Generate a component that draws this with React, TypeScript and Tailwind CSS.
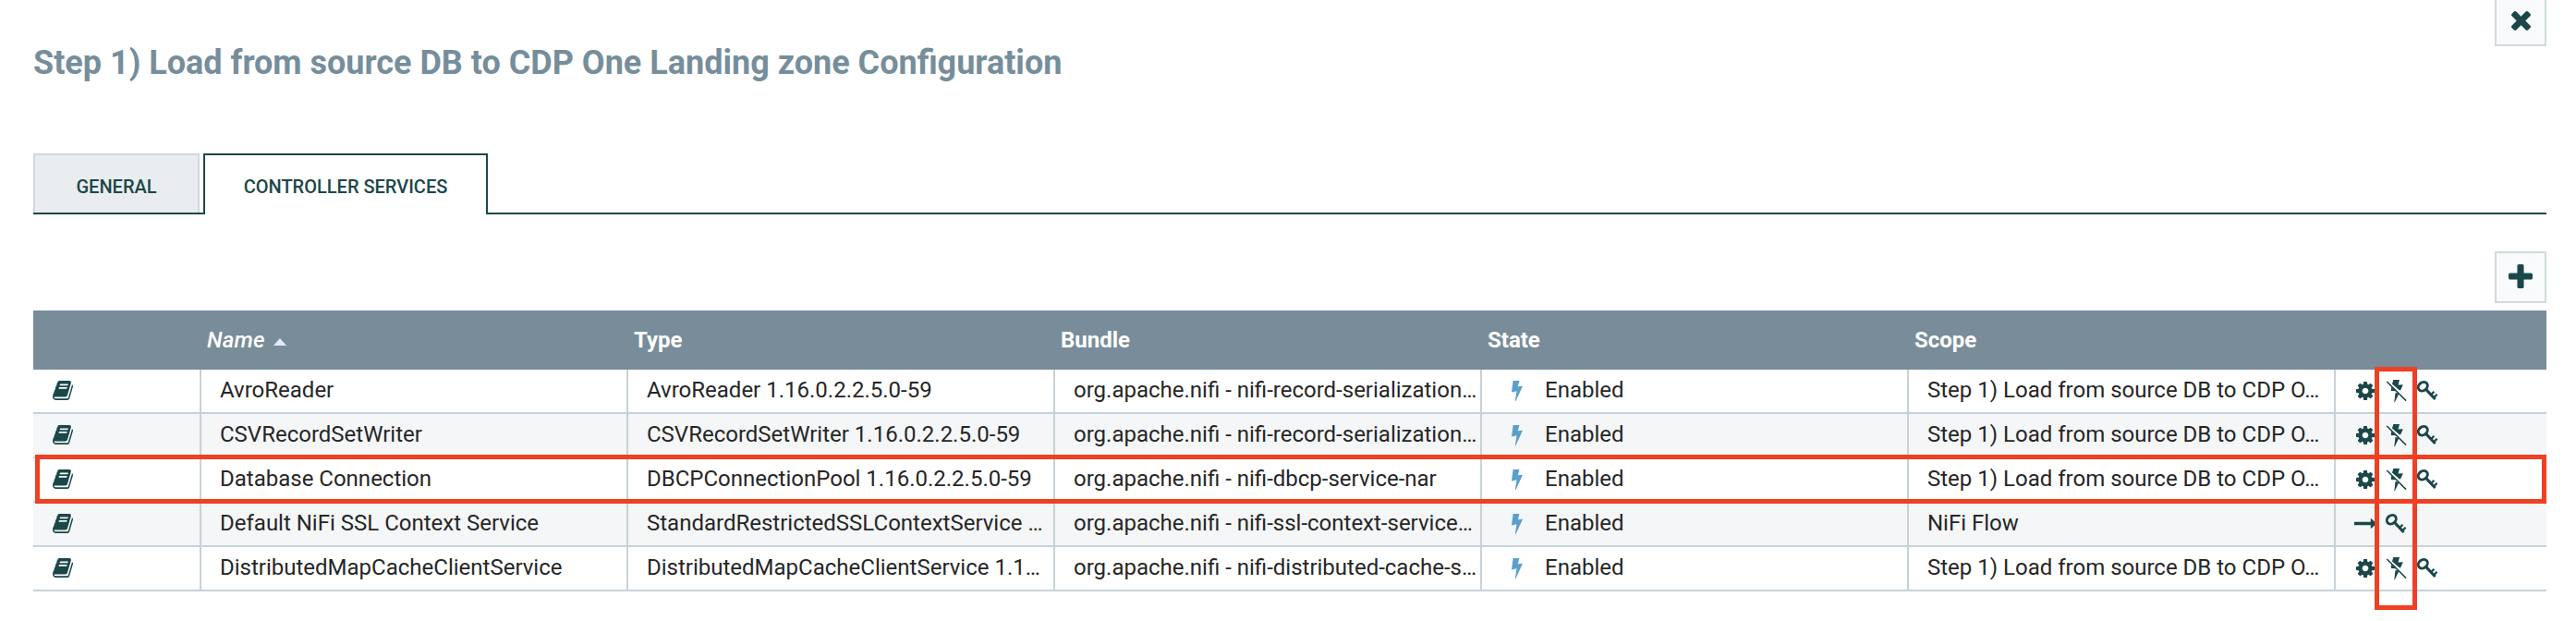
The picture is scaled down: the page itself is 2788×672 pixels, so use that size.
import React from "react";

const INK = "#1b4749";

const BOOK =
  "M1639 1058q40-57 18-129l-275-906q-19-64-76.5-107.5t-122.5-43.5h-923q-77 0-148.5 53.5t-99.5 131.5q-24 67-2 127q0 4 3 27t4 37q1 8-3 21.5t-3 19.5q2 11 8 21t16.5 23.5t16.5 23.5q23 38 45 91.5t30 91.5q3 10 .5 30t-.5 28q3 11 17 28t17 23q21 36 42 92t25 90q1 9-2.5 32t.5 28q4 13 22 30.5t22 22.5q19 26 42.5 84.5t27.5 96.5q1 8-3 25.5t-2 26.5q2 8 9 18t18 23t17 21q8 12 16.5 30.5t15 35t16 36t19.5 32t26.5 23.5t36 11.5t47.5-5.5l-1-3q38 9 51 9h761q74 0 114-56t18-130l-274-906q-36-119-71.5-153.5t-128.5-34.5h-869q-27 0-38-15q-11-16-1-43q24-70 144-70h923q29 0 56 15.5t35 41.5l300 987q7 22 5 57q38-15 59-43zM575 1056q-4-13 2-22.5t20-9.5h608q13 0 25.5 9.5t16.5 22.5l21 64q4 13-2 22.5t-20 9.5h-608q-13 0-25.5-9.5t-16.5-22.5zM492 800q-4-13 2-22.5t20-9.5h608q13 0 25.5 9.5t16.5 22.5l21 64q4 13-2 22.5t-20 9.5h-608q-13 0-25.5-9.5t-16.5-22.5z";
const CLOSE =
  "M1298 214q0 -40 -28 -68l-136 -136q-28 -28 -68 -28t-68 28l-294 294l-294 -294q-28 -28 -68 -28t-68 28l-136 136q-28 28 -28 68t28 68l294 294l-294 294q-28 28 -28 68t28 68l136 136q28 28 68 28t68 -28l294 -294l294 294q28 28 68 28t68 -28l136 -136q28 -28 28 -68t-28 -68l-294 -294l294 -294q28 -28 28 -68z";
const PLUS =
  "M1408 800v-192q0 -40 -28 -68t-68 -28h-416v-416q0 -40 -28 -68t-68 -28h-192q-40 0 -68 28t-28 68v416h-416q-40 0 -68 28t-28 68v192q0 40 28 68t68 28h416v416q0 40 28 68t68 28h192q40 0 68 -28t28 -68v-416h416q40 0 68 -28t28 -68z";
const GEAR =
  "M1024 640q0 106 -75 181t-181 75t-181 -75t-75 -181t75 -181t181 -75t181 75t75 181zM1536 749v-222q0 -12 -8 -23t-20 -13l-185 -28q-19 -54 -39 -91q35 -50 107 -138q10 -12 10 -25t-9 -23q-27 -37 -99 -108t-94 -71q-12 0 -26 9l-138 108q-44 -23 -91 -38q-16 -136 -29 -186q-7 -28 -36 -28h-222q-14 0 -24.5 8.5t-11.5 21.5l-28 184q-49 16 -90 37l-141 -107q-10 -9 -25 -9q-14 0 -25 11q-126 114 -165 168q-7 10 -7 23q0 12 8 23q15 21 51 66.5t54 70.5q-27 50 -41 99l-183 27q-13 2 -21 12.5t-8 23.5v222q0 12 8 23t19 13l186 28q14 46 39 92q-40 57 -107 138q-10 12 -10 24q0 10 9 23q26 36 98.5 107.5t94.5 71.5q13 0 26 -10l138 -107q44 23 91 38q16 136 29 186q7 28 36 28h222q14 0 24.5 -8.5t11.5 -21.5l28 -184q49 -16 90 -37l142 107q9 9 24 9q13 0 25 -10q129 -119 165 -170q7 -8 7 -22q0 -12 -8 -23q-15 -21 -51 -66.5t-54 -70.5q26 -50 41 -98l183 -28q13 -2 21 -12.5t8 -23.5z";
const ARROW =
  "M1728 643q0 -14 -10 -24l-384 -354q-16 -14 -35 -6q-19 9 -19 29v224h-1248q-14 0 -23 9t-9 23v192q0 14 9 23t23 9h1248v224q0 21 19 29t35 -5l384 -350q10 -10 10 -23z";

/* Glyph outlines have the y axis pointing up, so they are flipped here. */
function Glyph({ d, box, className }: { d: string; box: string; className: string }) {
  return (
    <svg viewBox={box} className={"shrink-0 " + className} fill={INK} preserveAspectRatio="none">
      <path d={d} transform="scale(1,-1)" />
    </svg>
  );
}

function Gear() {
  return <Glyph d={GEAR} box="0 -1408 1536 1536" className="mb-px h-[20px] w-[20px]" />;
}

function Arrow() {
  return <Glyph d={ARROW} box="0 -1040 1728 800" className="mb-0.5 h-[11px] w-[24px]" />;
}

function Key() {
  return (
    <svg viewBox="0 0 24 24" className="h-6 w-6 shrink-0" fill="none" stroke={INK}>
      <ellipse cx="7.3" cy="7.2" rx="5.4" ry="4.4" transform="rotate(-38 7.3 7.2)" strokeWidth="2.900" />
      <path d="M10.600 10.400L20.600 21" strokeWidth="3" />
      <path d="M15.800 16.600l3.600-3.800M18.800 19.600l3.800-3.800" strokeWidth="2.2" />
    </svg>
  );
}

function BoltOff() {
  return (
    <svg viewBox="0 0 24 26" className="h-[26px] w-6 shrink-0" fill={INK}>
      <path d="M8.300 1h6.700l-1.500 5.600l5.300-.3l-2.800 6.200l-1.500-.6l-7.500-6.400z" />
      <path d="M6 8.800l6 4.500l-6.200-.3z" />
      <path d="M10.500 15l4 .8l-4.600 9.400h-.6z" />
      <path d="M1.300 3l20.800 20.600" stroke={INK} strokeWidth="1.500" />
    </svg>
  );
}

function Bolt() {
  return (
    <svg viewBox="0 0 12 22" className="h-[22px] w-3 shrink-0" fill="#5a9fcb">
      <path d="M1.600 0h6.800l-1.600 6.300l5.200-.6l-7.500 16.300h-.7l1.700-10.800l-5.500 1.300z" />
    </svg>
  );
}

type Service = { name: string; type: string; bundle: string; scope: string; inherited?: boolean };

const STEP = "Step 1) Load from source DB to CDP O…";

const services: Service[] = [
  { name: "AvroReader", type: "AvroReader 1.16.0.2.2.5.0-59", bundle: "org.apache.nifi - nifi-record-serialization…", scope: STEP },
  { name: "CSVRecordSetWriter", type: "CSVRecordSetWriter 1.16.0.2.2.5.0-59", bundle: "org.apache.nifi - nifi-record-serialization…", scope: STEP },
  { name: "Database Connection", type: "DBCPConnectionPool 1.16.0.2.2.5.0-59", bundle: "org.apache.nifi - nifi-dbcp-service-nar", scope: STEP },
  { name: "Default NiFi SSL Context Service", type: "StandardRestrictedSSLContextService …", bundle: "org.apache.nifi - nifi-ssl-context-service…", scope: "NiFi Flow", inherited: true },
  { name: "DistributedMapCacheClientService", type: "DistributedMapCacheClientService 1.1…", bundle: "org.apache.nifi - nifi-distributed-cache-s…", scope: STEP },
];

const GRID = "grid grid-cols-[182px_repeat(5,462px)_228px]";
const CELL = "flex items-center overflow-hidden whitespace-nowrap border-r-2 border-[#c7d2d7] pb-0.5 pl-5";

function Row({ service, striped }: { service: Service; striped: boolean }) {
  return (
    <div className={`${GRID} h-12 border-b-2 border-[#c7d2d7] text-[24px] leading-[44px] text-[#262626] ${striped ? "bg-[#f4f6f7]" : "bg-white"}`}>
      <div className={CELL}>
        <Glyph d={BOOK} box="0 -1408 1664 1536" className="ml-px h-[21px] w-[22px]" />
      </div>
      <div className={CELL}>{service.name}</div>
      <div className={CELL}>{service.type}</div>
      <div className={CELL}>{service.bundle}</div>
      <div className={CELL}>
        <span className="ml-3 mr-6 mt-0.5 flex">
          <Bolt />
        </span>
        Enabled
      </div>
      <div className={CELL}>{service.scope}</div>
      <div className="flex items-center pl-5">
        {service.inherited ? (
          <>
            <span className="flex w-[33px]"><Arrow /></span>
            <Key />
          </>
        ) : (
          <>
            <span className="flex w-[34px] pl-0.5"><Gear /></span>
            <span className="flex w-[33px]"><BoltOff /></span>
            <Key />
          </>
        )}
      </div>
    </div>
  );
}

export default function App() {
  return (
    <div className="h-[672px] w-[2788px] overflow-hidden bg-white pl-9 pr-8 font-[Roboto,sans-serif]">
      <header className="flex h-[166px] items-start justify-between">
        <h1 className="mt-[46px] whitespace-nowrap text-[36px] font-bold leading-[44px] text-[#768e9b]">
          Step 1) Load from source DB to CDP One Landing zone Configuration
        </h1>
        <button className="flex h-[50px] w-14 justify-center border-2 border-t-0 border-[#cfdadb] bg-[#f9fafb] pt-3">
          <Glyph d={CLOSE} box="110 -1170 1188 1188" className="h-[21px] w-[21px]" />
        </button>
      </header>

      <nav className="flex h-[66px] text-[20px] font-medium text-[#1b4749]">
        <div className="w-[184px] border-b-2 border-[#1b4749]">
          <div className="flex h-16 w-[180px] items-center justify-center border-2 border-b-0 border-[#cfdadb] bg-[#e9edef] pt-1.5">GENERAL</div>
        </div>
        <div className="flex w-[308px] items-center justify-center border-2 border-b-0 border-[#1b4749] pt-1">CONTROLLER SERVICES</div>
        <div className="flex-1 border-b-2 border-[#1b4749]" />
      </nav>

      <div className="flex h-[104px] justify-end pt-10">
        <button className="flex h-14 w-14 items-center justify-center border-2 border-[#cfdadb] bg-[#f9fafb]">
          <Glyph d={PLUS} box="0 -1408 1408 1408" className="mb-0.5 h-[26px] w-[26px]" />
        </button>
      </div>

      <section className="relative">
        <div className={`${GRID} h-16 items-center bg-[#788d99] text-[24px] font-bold text-white`}>
          <div />
          <div className="flex items-center pl-1.5">
            <em className="w-[62px] font-medium tracking-[0.2px]">Name</em>
            <svg viewBox="0 0 14 8" className="ml-2.5 mt-1 h-2 w-3.5" fill="#e3e9f7">
              <path d="M7 0l7 8h-14z" />
            </svg>
          </div>
          <div className="pl-1.5">Type</div>
          <div className="pl-1.5">Bundle</div>
          <div className="pl-1.5">State</div>
          <div className="pl-1.5">Scope</div>
          <div />
        </div>
        {services.map((s, i) => (
          <Row key={s.name} service={s} striped={i % 2 === 1} />
        ))}
        <div className="absolute left-[2px] top-[156px] h-[53px] w-[2718px] border-[5px] border-[#ee4023]" />
        <div className="absolute left-[2534px] top-[61px] h-[263px] w-[46px] border-[5px] border-[#ee4023]" />
      </section>
    </div>
  );
}
